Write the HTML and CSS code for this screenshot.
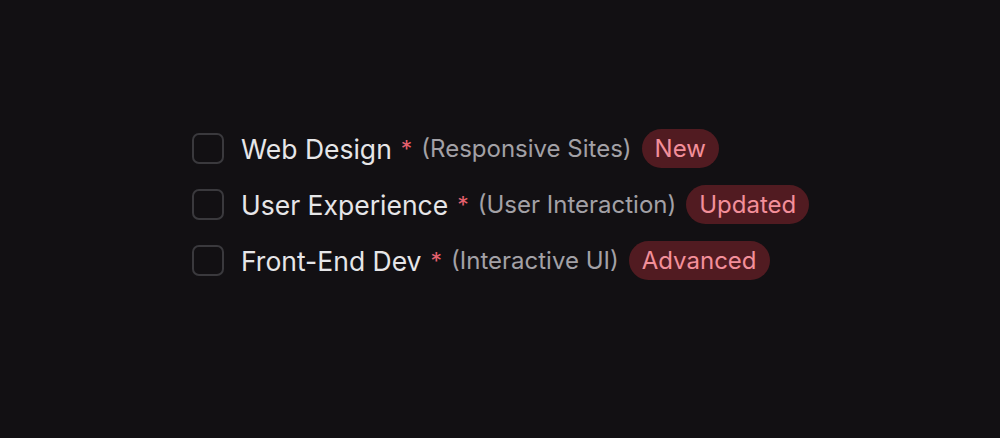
FILE: index.html
```html
<!DOCTYPE html>
<html>
<head>
<meta charset="utf-8">
<link rel="stylesheet" href="styles.css">
</head>
<body>
<div class="page">
  <ul class="list">
    <li class="item">
      <span class="box"></span>
      <span class="label">Web Design</span>
      <span class="req">*</span>
      <span class="hint">(Responsive Sites)</span>
      <span class="badge">New</span>
    </li>
    <li class="item">
      <span class="box"></span>
      <span class="label">User Experience</span>
      <span class="req">*</span>
      <span class="hint">(User Interaction)</span>
      <span class="badge">Updated</span>
    </li>
    <li class="item">
      <span class="box"></span>
      <span class="label">Front-End Dev</span>
      <span class="req">*</span>
      <span class="hint">(Interactive UI)</span>
      <span class="badge">Advanced</span>
    </li>
  </ul>
</div>
</body>
</html>
```
FILE: styles.css
```css
html, body {
  margin: 0;
  padding: 0;
  background: #121013;
}
body {
  font-family: Inter, "Noto Sans", sans-serif;
  width: 1000px;
  height: 438px;
  overflow: hidden;
}
.page {
  padding: 129px 0 0 192px;
}
.list {
  list-style: none;
  margin: 0;
  padding: 0;
  display: flex;
  flex-direction: column;
  gap: 17px;
}
.item {
  display: flex;
  align-items: center;
  height: 39px;
}
.box {
  width: 28px;
  height: 27px;
  border: 2px solid #3a393d;
  border-radius: 7px;
  box-sizing: content-box;
  margin-right: 17px;
}
.label {
  font-size: 26.5px;
  color: #e6e6e8;
}
.req {
  font-size: 23px;
  color: #e5606e;
  margin-left: 9px;
}
.hint {
  font-size: 24px;
  color: #a3a1a6;
  margin-left: 9px;
}
.badge {
  margin-left: 10px;
  background: #511b21;
  color: #f38f9a;
  font-size: 24px;
  font-weight: 400;
  height: 39px;
  line-height: 39px;
  padding: 0 13px;
  border-radius: 20px;
}
```
